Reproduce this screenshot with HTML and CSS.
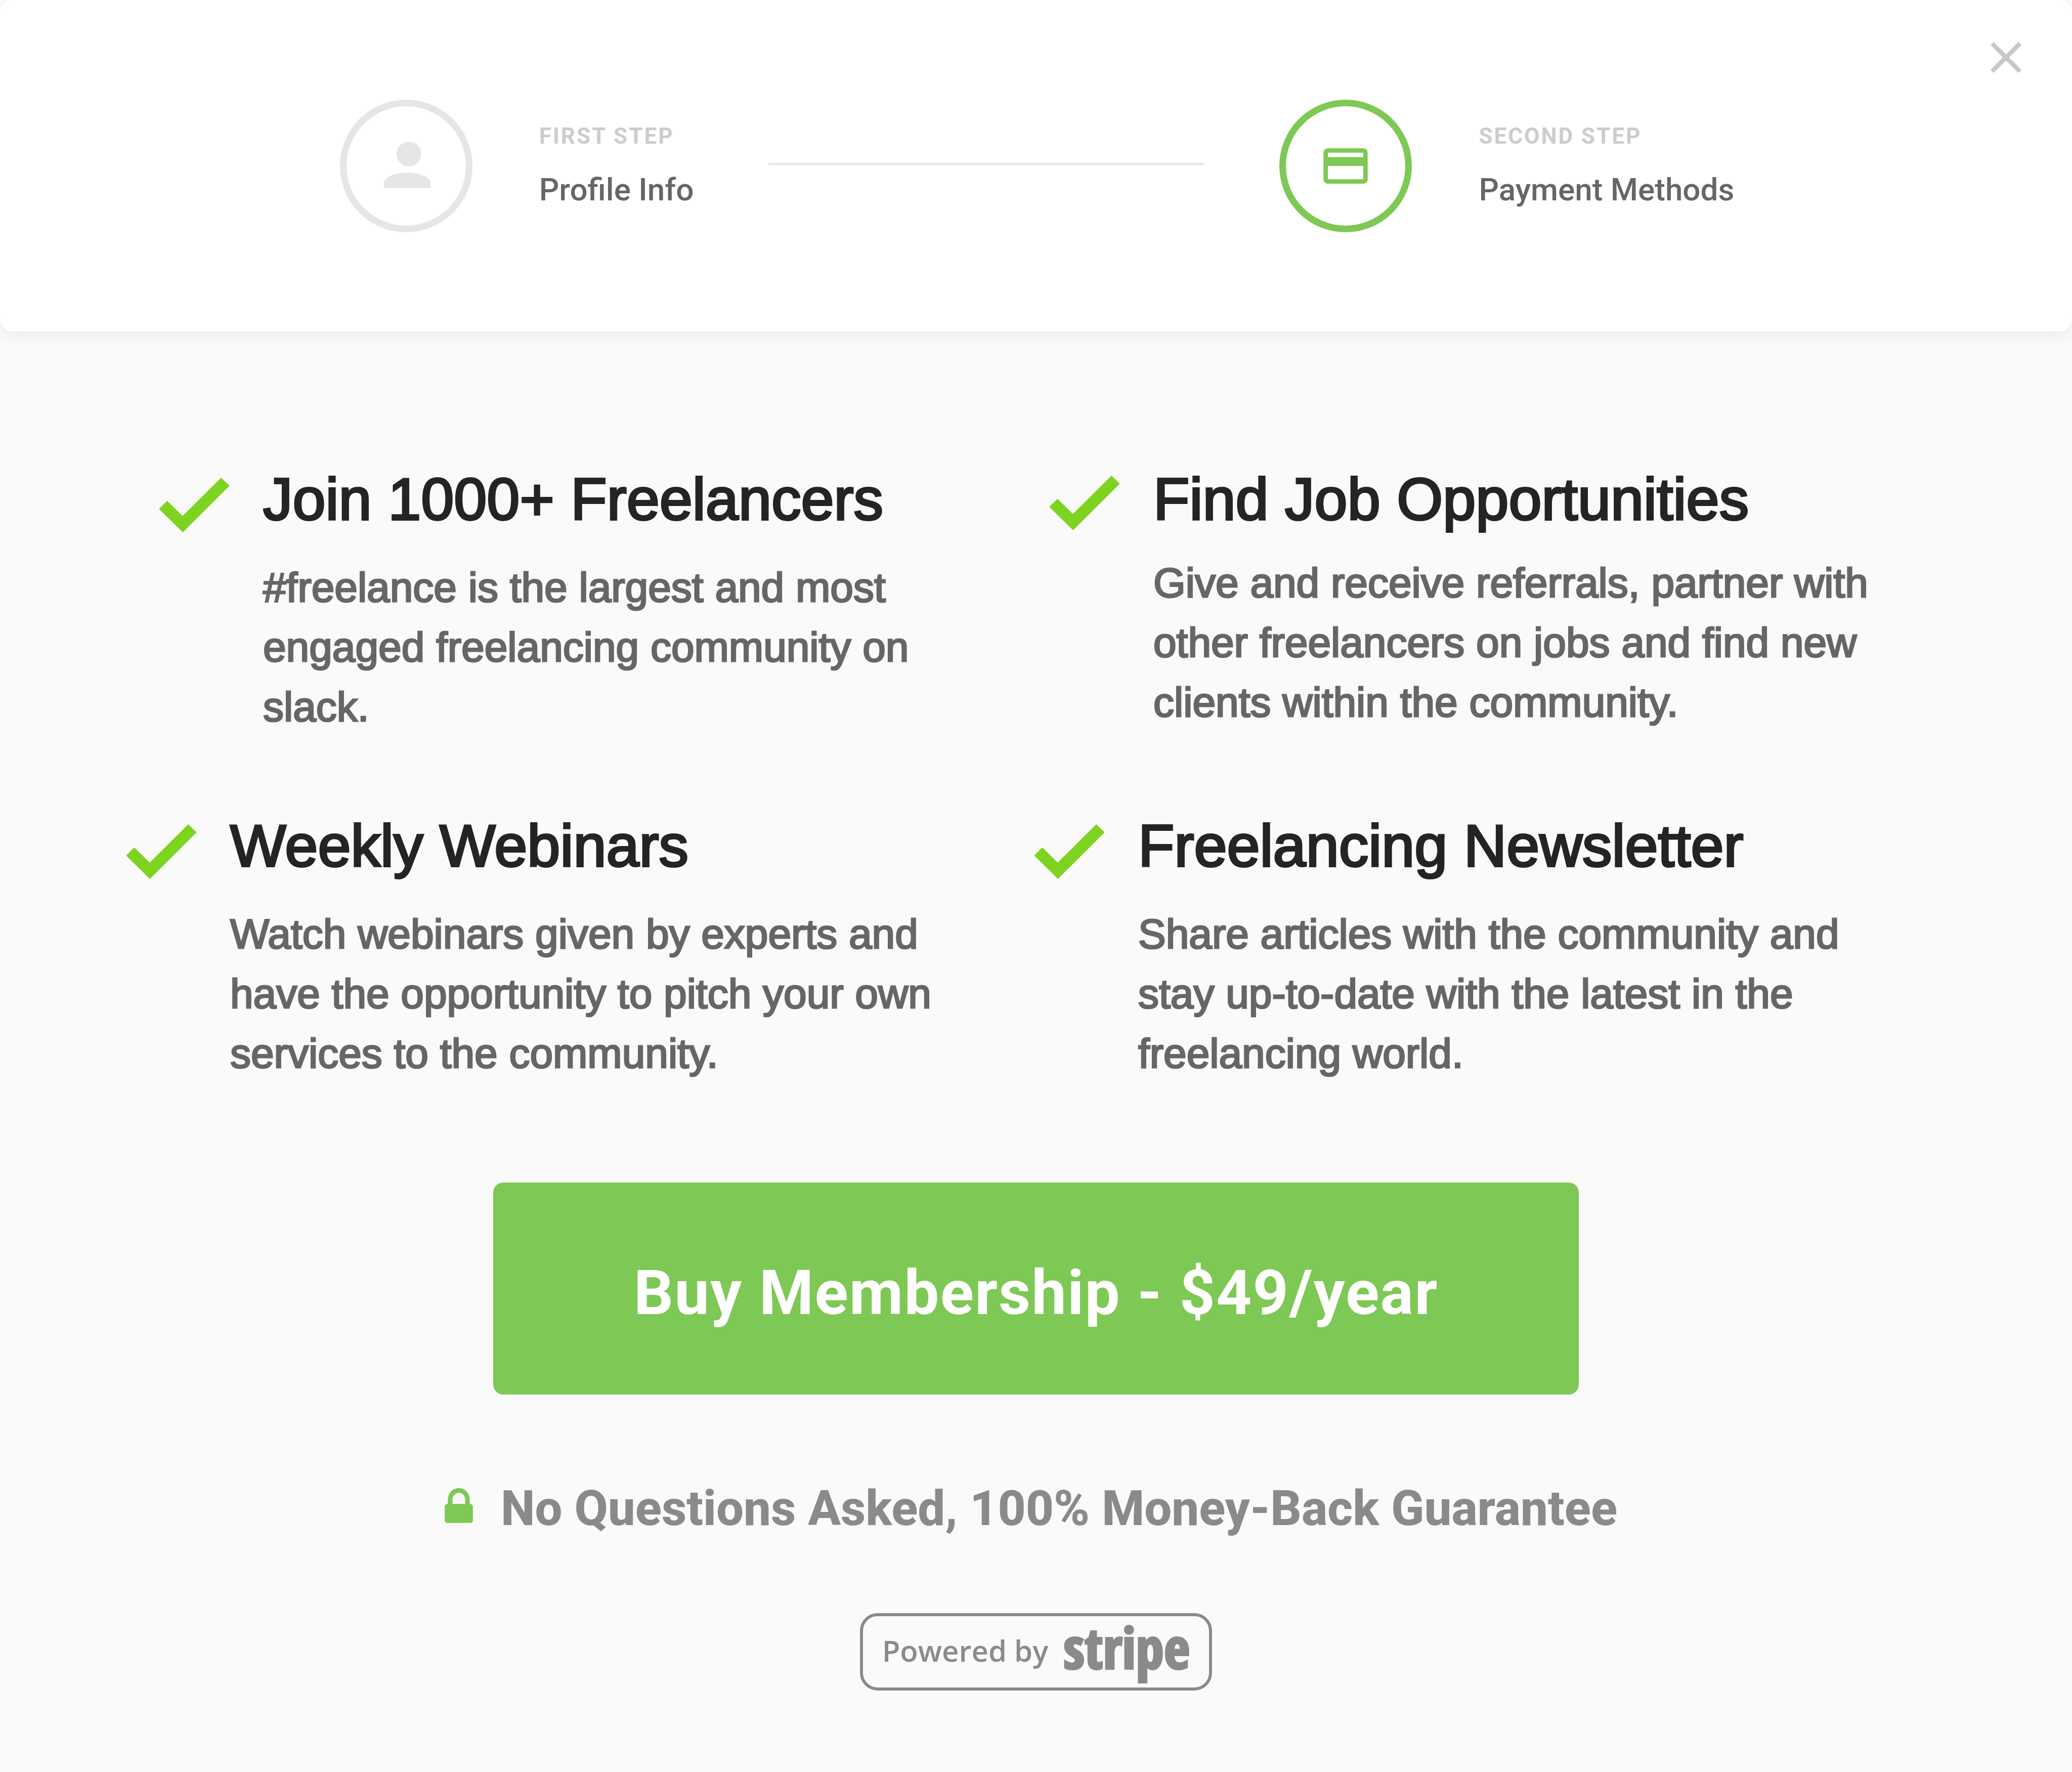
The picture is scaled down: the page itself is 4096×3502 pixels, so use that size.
FILE: index.html
```html
<!DOCTYPE html>
<html lang="en">
<head>
  <meta charset="utf-8">
  <meta name="viewport" content="width=device-width, initial-scale=1">
  <title>Freelance membership</title>
  <link rel="stylesheet" href="styles.css">
</head>
<body>
  <header class="header">
    <section class="step">
      <svg class="step-icon" viewBox="0 0 300 300" aria-hidden="true">
        <circle class="ring" cx="150" cy="150" r="142.5"/>
        <circle cx="156" cy="123" r="28"/>
        <path d="M100 200v-12c0-14 30-23 52-23s53 9 53 23v12z"/>
      </svg>
      <div class="step-text">
        <p class="step-label">FIRST STEP</p>
        <p class="step-name">Profile Info</p>
      </div>
    </section>
    <div class="connector"></div>
    <section class="step step-active">
      <svg class="step-icon" viewBox="0 0 300 300" aria-hidden="true">
        <circle class="ring" cx="150" cy="150" r="142.5"/>
        <path fill-rule="evenodd" d="M110 110h80a10 10 0 0 1 10 10v60a10 10 0 0 1-10 10h-80a10 10 0 0 1-10-10v-60a10 10 0 0 1 10-10zM110 120v10h80v-10zM110 150v30h80v-30z"/>
      </svg>
      <div class="step-text">
        <p class="step-label">SECOND STEP</p>
        <p class="step-name">Payment Methods</p>
      </div>
    </section>
    <button class="close" type="button" aria-label="Close">
      <svg viewBox="0 0 70 70" aria-hidden="true"><path d="M3.500 3.500L66.500 66.500M66.500 3.500L3.500 66.500"/></svg>
    </button>
  </header>

  <main class="main">
    <div class="features features-first">
      <article class="feature">
        <svg class="check" viewBox="0 0 160 124" aria-hidden="true"><path d="M0 71L18.500 52.500L53.500 87L141 0L160 18.500L54 124z"/></svg>
        <div class="feature-text">
          <h2>Join 1000+ Freelancers</h2>
          <p>#freelance is the largest and most engaged freelancing community on slack.</p>
        </div>
      </article>
      <article class="feature feature-tight">
        <svg class="check" viewBox="0 0 160 124" aria-hidden="true"><path d="M0 71L18.500 52.500L53.500 87L141 0L160 18.500L54 124z"/></svg>
        <div class="feature-text">
          <h2>Find Job Opportunities</h2>
          <p>Give and receive referrals, partner with other freelancers on jobs and find new clients within the community.</p>
        </div>
      </article>
    </div>
    <div class="features">
      <article class="feature">
        <svg class="check" viewBox="0 0 160 124" aria-hidden="true"><path d="M0 71L18.500 52.500L53.500 87L141 0L160 18.500L54 124z"/></svg>
        <div class="feature-text">
          <h2>Weekly Webinars</h2>
          <p>Watch webinars given by experts and have the opportunity to pitch your own services to the community.</p>
        </div>
      </article>
      <article class="feature">
        <svg class="check" viewBox="0 0 160 124" aria-hidden="true"><path d="M0 71L18.500 52.500L53.500 87L141 0L160 18.500L54 124z"/></svg>
        <div class="feature-text">
          <h2>Freelancing Newsletter</h2>
          <p>Share articles with the community and stay up-to-date with the latest in the freelancing world.</p>
        </div>
      </article>
    </div>

    <button class="buy" type="button">Buy Membership - $49/year</button>

    <p class="guarantee">
      <svg class="lock" viewBox="0 0 64 92" aria-hidden="true"><path fill-rule="evenodd" d="M7 36V28C7 12 17 0 32 0S57 12 57 28V36H58a6 6 0 0 1 6 6V73a6 6 0 0 1-6 6H6a6 6 0 0 1-6-6V42a6 6 0 0 1 6-6zM17.500 36H46.500V27C46.500 17 40 10.500 32 10.500S17.500 17 17.500 27z"/></svg>
      <span>No Questions Asked, 100% Money-Back Guarantee</span>
    </p>

    <a class="stripe" href="#stripe">
      <span class="stripe-lead">Powered by</span>
      <span class="stripe-name">stripe</span>
    </a>
  </main>
</body>
</html>
```
FILE: styles.css
```css
* {
  box-sizing: border-box;
}

body {
  margin: 0;
  min-height: 100vh;
  background: #fafafa;
  color: #666;
  font-family: Roboto, sans-serif;
}

h2,
p {
  margin: 0;
}

svg {
  display: block;
  flex: none;
}

button {
  border: 0;
  font-family: inherit;
  cursor: pointer;
}

/* Steps header */
.header {
  position: relative;
  display: flex;
  align-items: center;
  padding: 197px 16.3% 196px 16.4%;
  background: #fff;
  border-radius: 26px;
  box-shadow: 0 9px 26px rgba(0, 0, 0, 0.06);
}

.step {
  display: flex;
  align-items: center;
  gap: 132px;
  color: #e6e6e6;
}

.step-active {
  color: #7ec855;
}

.step-icon {
  width: 262px;
  height: 262px;
  fill: currentColor;
}

.ring {
  fill: none;
  stroke: currentColor;
  stroke-width: 15;
}

.step-text {
  display: flex;
  flex-direction: column;
  gap: 44px;
  padding-bottom: 2px;
  white-space: nowrap;
}

.step-label {
  color: #ccc;
  font-size: 44px;
  font-weight: 700;
  line-height: 52px;
  letter-spacing: 3px;
}

.step-name {
  color: #666;
  font-size: 62px;
  font-weight: 500;
  line-height: 72px;
}

.connector {
  flex: 1;
  height: 4px;
  margin: 0 148px 8px;
  background: #e6e6e6;
}

.close {
  position: absolute;
  top: 83px;
  right: 100px;
  padding: 0;
  background: none;
}

.close svg {
  width: 61px;
  height: 61px;
  fill: none;
  stroke: #c8c8c6;
  stroke-width: 10;
}

/* Features */
.main {
  display: flex;
  flex-direction: column;
  align-items: center;
  padding: 264px 0 160px;
}

.features {
  display: grid;
  grid-template-columns: 1fr 1fr;
  width: 100%;
  padding: 0 257px 0 249px;
}

.features-first {
  margin-bottom: 148px;
  padding: 0 262px 0 314px;
}

.feature {
  display: flex;
  align-items: flex-start;
  gap: 66px;
}

.check {
  width: 140px;
  height: 108px;
  margin-top: 25px;
  fill: #7ed321;
}

.feature-text {
  display: flex;
  flex-direction: column;
  gap: 47px;
  max-width: 1440px;
  font-family: "Liberation Sans", Arial, sans-serif;
}

.feature-tight .check {
  margin-top: 21px;
}

.feature-tight .feature-text {
  gap: 38px;
}

.feature h2 {
  color: #242424;
  font-size: 117px;
  font-weight: 400;
  line-height: 136px;
  -webkit-text-stroke: 4px #242424;
}

.feature p {
  font-size: 82px;
  line-height: 118px;
  -webkit-text-stroke: 3px #666;
}

/* Purchase */
.buy {
  width: 52.4%;
  margin-top: 196px;
  padding: 146px 0 129px;
  border-radius: 20px;
  background: #7ec855;
  color: #fff;
  font-size: 123px;
  font-weight: 700;
  line-height: 144px;
  letter-spacing: 2px;
}

.guarantee {
  display: flex;
  align-items: center;
  gap: 55px;
  margin-top: 169px;
  padding-right: 20px;
  color: #8a8a8a;
  font-size: 96px;
  font-weight: 800;
  line-height: 112px;
}

.lock {
  width: 56px;
  height: 80px;
  fill: #7ec855;
}

.stripe {
  display: flex;
  align-items: center;
  gap: 30px;
  height: 153px;
  margin-top: 151px;
  padding: 0 38px;
  border: 6px solid #8a8a8a;
  border-radius: 35px;
  color: #8a8a8a;
  text-decoration: none;
}

.stripe-lead {
  padding-bottom: 6px;
  font: 600 58px/72px "Open Sans", sans-serif;
}

.stripe-name {
  padding-bottom: 20px;
  font: 800 112px/112px "Open Sans Condensed", "Open Sans", sans-serif;
  -webkit-text-stroke: 4px #8a8a8a;
}
```
